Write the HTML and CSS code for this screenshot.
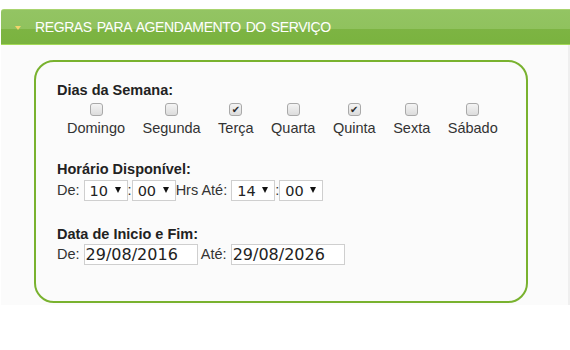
FILE: index.html
```html
<!DOCTYPE html>
<html lang="pt-BR">

<head>
    <meta charset="UTF-8">
    <meta name="viewport" content="width=device-width, initial-scale=1.0">
    <title>Regras para agendamento</title>
    <link rel="stylesheet" href="styles.css">
</head>

<body>
    <div class="panel">
        <div class="panel-head">
            <span class="arrow"></span>
            <span class="title">REGRAS PARA AGENDAMENTO DO SERVIÇO</span>
        </div>
        <div class="panel-body">
            <div class="rules">
                <h3>Dias da Semana:</h3>
                <div class="days">
                    <label class="day"><input type="checkbox"><span>Domingo</span></label>
                    <label class="day"><input type="checkbox"><span>Segunda</span></label>
                    <label class="day"><input type="checkbox" checked><span>Terça</span></label>
                    <label class="day"><input type="checkbox"><span>Quarta</span></label>
                    <label class="day"><input type="checkbox" checked><span>Quinta</span></label>
                    <label class="day"><input type="checkbox"><span>Sexta</span></label>
                    <label class="day"><input type="checkbox"><span>Sábado</span></label>
                </div>

                <h3 class="gap">Horário Disponível:</h3>
                <div class="line">De: <span class="sel"><select><option>10</option></select></span>:<span class="sel"><select><option>00</option></select></span>Hrs Até: <span class="sel"><select><option>14</option></select></span>:<span class="sel"><select><option>00</option></select></span></div>

                <h3 class="gap">Data de Inicio e Fim:</h3>
                <div class="line dates">De: <input type="text" class="date" value="29/08/2016"> Até: <input type="text" class="date" value="29/08/2026"></div>
            </div>
        </div>
    </div>
</body>

</html>
```

FILE: styles.css
```css
/* reset */
html,
body {
    width: 100%;
    height: 100%
}

body,
h3,
input,
select {
    margin: 0;
    padding: 0
}

body {
    background: #fff;
    font-family: 'Liberation Sans', Arial, sans-serif;
    font-size: 14.5px;
    color: #333;
}

/* panel */
.panel {
    padding-top: 9px;
    margin-left: 1px;
}

.panel-head {
    display: flex;
    align-items: center;
    height: 34px;
    border-top: 1px solid #a9d46f;
    border-bottom: 1px solid #a4d957;
    border-top-left-radius: 3px;
    background: linear-gradient(#93c463 0, #90c25e 55%, #7db443 55%, #7ab33f 100%);
}

.panel-head .arrow {
    width: 0;
    height: 0;
    margin: 1px 14px 0 14px;
    border-left: 3px solid transparent;
    border-right: 3px solid transparent;
    border-top: 4px solid #f2d46c;
}

.panel-head .title {
    color: #fff;
    font-size: 14px;
    letter-spacing: -0.4px;
    word-spacing: 1.5px;
}

.panel-body {
    background: #fbfbfb;
    border-right: 2px solid #efefef;
    padding: 15px 0 2px 33px;
}

.rules {
    border: 2px solid #79b22f;
    border-radius: 20px;
    padding: 20px 0 0 21px;
    box-sizing: content-box;
    width: 469px;
    height: 219px;
}

.rules h3 {
    font-size: 14.5px;
    line-height: 16px;
    font-weight: bold;
    color: #222;
}

.rules h3.gap {
    margin-top: 25px;
}

/* days */
.days {
    display: flex;
    gap: 17.5px;
    margin-top: 5px;
    padding-left: 10px;
}

.day {
    display: flex;
    flex-direction: column;
    align-items: center;
}

.day span {
    margin-top: 4px;
    line-height: 16px;
}

.day input {
    appearance: none;
    -webkit-appearance: none;
    width: 13px;
    height: 13px;
    border: 1px solid #a9a9a9;
    border-radius: 3px;
    background: linear-gradient(#f4f4f4, #dcdcdc);
    box-sizing: border-box;
    display: grid;
    place-content: center;
}

.day input:checked::after {
    content: "✔";
    font-family: 'DejaVu Sans', sans-serif;
    font-size: 10px;
    line-height: 9px;
    color: #2a2a2a;
}

/* hours and dates */
.line {
    margin-top: 3px;
    line-height: 21px;
    height: 21px;
}

.dates {
    margin-top: 2px;
}

.sel {
    position: relative;
    display: inline-block;
    vertical-align: top;
}

.sel select {
    appearance: none;
    -webkit-appearance: none;
    width: 44px;
    height: 21px;
    border: 1px solid #cfcfcf;
    border-radius: 0;
    background: #fff;
    padding-left: 5px;
    font-family: 'DejaVu Sans', Verdana, sans-serif;
    font-size: 14.5px;
    color: #222;
    box-sizing: border-box;
}

.sel::after {
    content: "";
    position: absolute;
    right: 7px;
    top: 7px;
    border-left: 3px solid transparent;
    border-right: 3px solid transparent;
    border-top: 6px solid #111;
    pointer-events: none;
}

.date {
    width: 114px;
    height: 21px;
    border: 1px solid #cfcfcf;
    padding: 0 0 0 1px;
    font-family: 'DejaVu Sans', Verdana, sans-serif;
    font-size: 16px;
    color: #222;
    box-sizing: border-box;
    vertical-align: top;
    background: #fff;
}
```
